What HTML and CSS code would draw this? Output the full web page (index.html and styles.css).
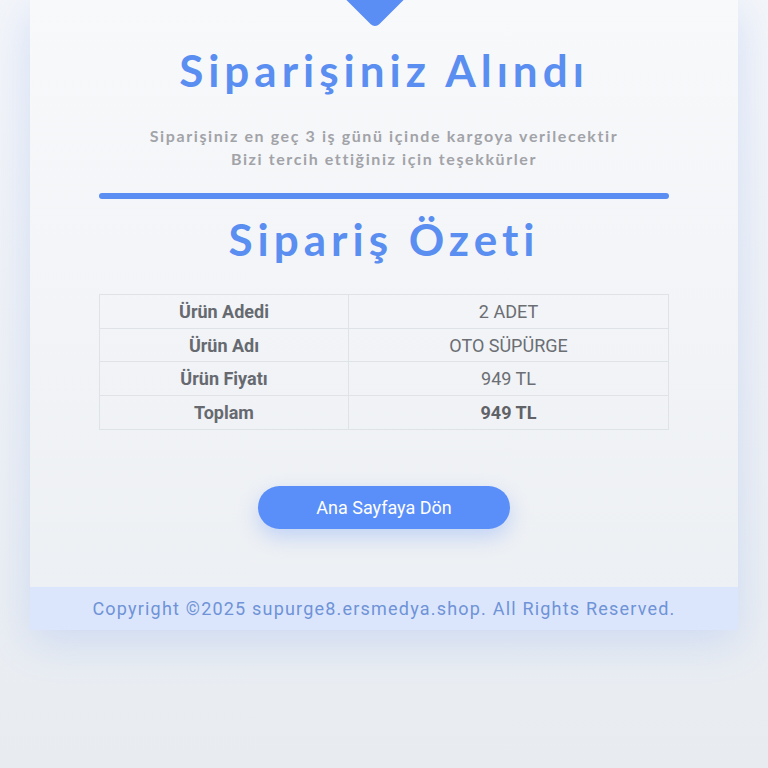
FILE: index.html
```html
<!DOCTYPE html>
<html lang="tr">
<head>
<meta charset="utf-8">
<title>Siparişiniz Alındı</title>
<link rel="stylesheet" href="styles.css">
</head>
<body>
<div class="card">
  <div class="badge"></div>
  <div class="content">
    <h1 class="title">Siparişiniz Alındı</h1>
    <p class="subtitle">Siparişiniz en geç 3 iş günü içinde kargoya verilecektir<br>Bizi tercih ettiğiniz için teşekkürler</p>
    <div class="bar"></div>
    <h2 class="title">Sipariş Özeti</h2>
    <table class="summary">
      <tr><th>Ürün Adedi</th><td>2 ADET</td></tr>
      <tr><th>Ürün Adı</th><td>OTO SÜPÜRGE</td></tr>
      <tr><th>Ürün Fiyatı</th><td>949 TL</td></tr>
      <tr><th>Toplam</th><td class="strong">949 TL</td></tr>
    </table>
    <a class="btn" href="#">Ana Sayfaya Dön</a>
  </div>
  <div class="footer">Copyright ©2025 supurge8.ersmedya.shop. All Rights Reserved.</div>
</div>
</body>
</html>
```
FILE: styles.css
```css
html, body {
  margin: 0;
  padding: 0;
}
body {
  min-height: 768px;
  background: linear-gradient(to bottom, #f3f5f9, #e8ecf1);
  font-family: Roboto, "Liberation Sans", sans-serif;
}
.card {
  position: relative;
  width: 708px;
  margin: 0 auto;
  overflow: hidden;
  background: linear-gradient(to bottom, #f8f9fb, #eceff3);
  box-shadow: 0 12px 40px rgba(90, 140, 240, 0.2);
}
.badge {
  position: absolute;
  left: calc(50% - 49px);
  top: -68px;
  width: 80px;
  height: 80px;
  background: #5a8ef5;
  border-radius: 6px;
  transform: rotate(45deg);
}
.content {
  display: flex;
  flex-direction: column;
  align-items: center;
  padding: 42px 69px 0;
}
.title {
  margin: 0;
  font-family: Lato, "Open Sans", sans-serif;
  font-weight: 700;
  font-size: 44px;
  line-height: 56px;
  letter-spacing: 5px;
  color: #5a8ef0;
}
.subtitle {
  margin: 26px 0 0;
  font-family: Lato, "Open Sans", sans-serif;
  font-weight: 700;
  font-size: 16px;
  line-height: 23px;
  letter-spacing: 1.6px;
  color: #a2a3a8;
  text-align: center;
}
.bar {
  align-self: stretch;
  height: 6px;
  margin: 23px 0 12px;
  border-radius: 3px;
  background: #5a8ef2;
}
.summary {
  width: 570px;
  margin-top: 27px;
  border-collapse: collapse;
  font-size: 18px;
  color: #666a70;
}
.summary th, .summary td {
  height: 32.7px;
  padding: 0;
  border: 1px solid #dfe2e7;
  text-align: center;
}
.summary th {
  width: 248px;
  font-weight: 700;
}
.summary td {
  font-weight: 400;
  color: #6b6e73;
}
.summary td.strong {
  font-weight: 700;
  color: #5f6267;
}
.btn {
  display: flex;
  align-items: center;
  justify-content: center;
  width: 252px;
  height: 43px;
  margin-top: 56px;
  border-radius: 22px;
  background: #5a8ef9;
  color: #ffffff;
  font-size: 18px;
  text-decoration: none;
  box-shadow: 0 8px 20px rgba(90, 142, 249, 0.3);
}
.footer {
  margin-top: 58px;
  height: 43px;
  display: flex;
  align-items: center;
  justify-content: center;
  background: #dbe6fd;
  color: #6f93d6;
  font-size: 18px;
  letter-spacing: 1.2px;
}
```
